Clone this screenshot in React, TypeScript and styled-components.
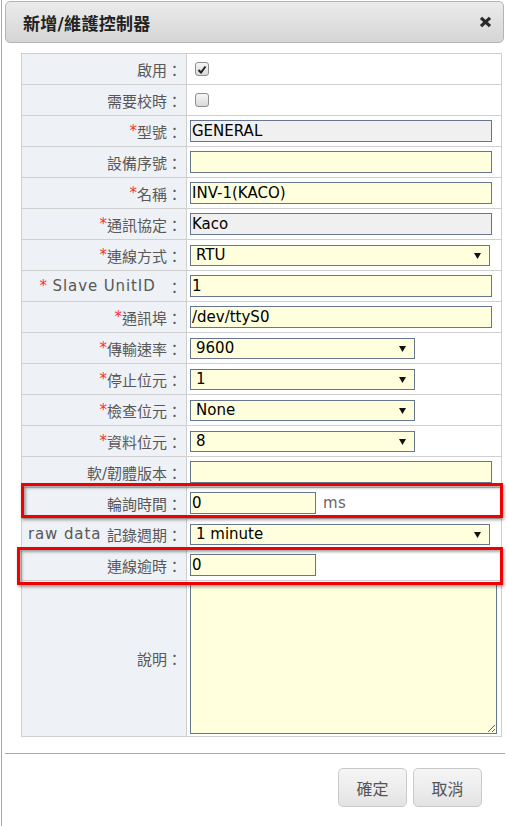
import React from "react";
import styled, { createGlobalStyle } from "styled-components";

const GlobalStyle = createGlobalStyle`
  html, body { margin: 0; padding: 0; background: #fff; }
  body { font-family: "DejaVu Sans", "Noto Sans CJK TC", sans-serif; }
  * { box-sizing: border-box; }
`;

const Dialog = styled.div`
  width: 507px;
  height: 826px;
  margin-left: 1px;
  border-left: 1px solid #a8a8a8;
  padding: 1px 0 0 3px;
  display: flex;
  flex-direction: column;
  overflow: hidden;
`;

const Header = styled.div`
  width: 499px;
  height: 42px;
  border: 1px solid #b4b4b4;
  border-radius: 5px;
  background: linear-gradient(#ebebeb, #d5d5d5);
  display: flex;
  align-items: center;
  justify-content: space-between;
  padding: 0 11px 0 17px;
`;

const Title = styled.span`
  font-size: 17px;
  font-weight: bold;
  color: #222;
  letter-spacing: 0.3px;
`;

const Close = styled.span`
  display: flex;
  width: 13px;
  height: 12px;
`;

const Body = styled.div`
  padding: 10px 0 16px 16px;
`;

const Form = styled.div`
  position: relative;
  width: 481px;
  display: grid;
  grid-template-columns: 165px 315px;
  border-top: 1px solid #cfcfcf;
  border-left: 1px solid #cfcfcf;
`;

const LabelCell = styled.div<{ $tall?: boolean }>`
  height: ${(p) => (p.$tall ? 156 : 31)}px;
  border-right: 1px solid #cfcfcf;
  border-bottom: 1px solid #cfcfcf;
  background: #eef1f5;
  display: flex;
  align-items: center;
  justify-content: flex-end;
  padding-right: 4px;
  font-size: 15px;
  color: #585858;
  white-space: pre;
`;

const Star = styled.span`
  color: #ff3030;
`;

const Latin = styled.span`
  letter-spacing: 0.9px;
`;

const ValueCell = styled.div<{ $tall?: boolean }>`
  height: ${(p) => (p.$tall ? 156 : 31)}px;
  border-right: 1px solid #cfcfcf;
  border-bottom: 1px solid #cfcfcf;
  display: flex;
  align-items: center;
  padding-left: 3px;
  gap: 7px;
`;

const TextField = styled.input<{ $w: number; $readonly?: boolean }>`
  width: ${(p) => p.$w}px;
  height: 22px;
  border: 1px solid #67768f;
  background: ${(p) => (p.$readonly ? "#f0f0f0" : "#ffffdd")};
  font-family: "DejaVu Sans", sans-serif;
  font-size: 15px;
  color: #000;
  padding: 0 1px;
  margin: 0;
  outline: none;
  border-radius: 0;
`;

const SelectWrap = styled.div<{ $w: number }>`
  position: relative;
  width: ${(p) => p.$w}px;
  height: 21px;
`;

const Select = styled.select`
  appearance: none;
  -webkit-appearance: none;
  width: 100%;
  height: 100%;
  border: 1px solid #67768f;
  border-radius: 0;
  background: #ffffdd;
  font-family: "DejaVu Sans", sans-serif;
  font-size: 15px;
  color: #000;
  padding: 0 0 0 5px;
  margin: 0;
  outline: none;
`;

const Arrow = styled.svg`
  position: absolute;
  right: 9px;
  top: 8px;
  pointer-events: none;
`;

const Unit = styled.span`
  font-size: 15px;
  color: #666;
  letter-spacing: 0.5px;
`;

const Check = styled.span`
  width: 14px;
  height: 14px;
  margin-left: 5px;
  border: 1px solid #8e8e8e;
  border-radius: 3px;
  background: linear-gradient(#f6f6f6, #d9d9d9);
  display: flex;
  align-items: center;
  justify-content: center;
`;

const TextArea = styled.textarea`
  width: 307px;
  height: 150px;
  border: 1px solid #67768f;
  background: #ffffdd;
  margin: 0;
  outline: none;
  resize: both;
  font-family: "DejaVu Sans", sans-serif;
  font-size: 15px;
`;

const Mark = styled.div<{ $top: number; $left: number; $w: number; $h: number }>`
  position: absolute;
  top: ${(p) => p.$top}px;
  left: ${(p) => p.$left}px;
  width: ${(p) => p.$w}px;
  height: ${(p) => p.$h}px;
  border: 3px solid #f00000;
  box-shadow: 1px 2px 3px rgba(0, 0, 0, 0.35), inset 2px 2px 3px rgba(0, 0, 0, 0.35);
  pointer-events: none;
`;

const Footer = styled.div`
  width: 500px;
  border-top: 1px solid #a9a9a9;
  padding: 14px 23px 0 0;
  display: flex;
  justify-content: flex-end;
  gap: 6px;
`;

const Button = styled.button`
  width: 69px;
  height: 39px;
  border: 1px solid #c9c9c9;
  border-radius: 5px;
  background: linear-gradient(#f5f5f5 0%, #ededed 50%, #e3e3e3 100%);
  font-family: "Noto Sans CJK TC", sans-serif;
  font-size: 16px;
  color: #555;
  padding: 0;
`;

const ArrowIcon = () => (
  <Arrow width="7" height="6" viewBox="0 0 7 6">
    <path d="M0 0H7L3.5 6Z" fill="#111" />
  </Arrow>
);

const Dropdown = ({ w, value }: { w: number; value: string }) => (
  <SelectWrap $w={w}>
    <Select defaultValue={value}>
      <option>{value}</option>
    </Select>
    <ArrowIcon />
  </SelectWrap>
);

const Label = ({ text, req }: { text: React.ReactNode; req?: boolean }) => (
  <LabelCell>
    {req && <Star>*</Star>}
    {text}
  </LabelCell>
);

export default function App() {
  return (
    <>
      <GlobalStyle />
      <Dialog>
        <Header>
          <Title>新增/維護控制器</Title>
          <Close>
            <svg width="13" height="12" viewBox="0 0 13 12">
              <path d="M2 1.8L11 10.2M11 1.8L2 10.2" stroke="#2a2a2a" strokeWidth="3.2" />
            </svg>
          </Close>
        </Header>
        <Body>
          <Form>
            <Label text="啟用：" />
            <ValueCell>
              <Check>
                <svg width="10" height="9" viewBox="0 0 10 9">
                  <path d="M1.5 5L4 7.5L8.5 1.5" stroke="#222" strokeWidth="2" fill="none" />
                </svg>
              </Check>
            </ValueCell>

            <Label text="需要校時：" />
            <ValueCell>
              <Check />
            </ValueCell>

            <Label text="型號：" req />
            <ValueCell>
              <TextField $w={302} $readonly defaultValue="GENERAL" readOnly />
            </ValueCell>

            <Label text="設備序號：" />
            <ValueCell>
              <TextField $w={302} defaultValue="" />
            </ValueCell>

            <Label text="名稱：" req />
            <ValueCell>
              <TextField $w={302} defaultValue="INV-1(KACO)" />
            </ValueCell>

            <Label text="通訊協定：" req />
            <ValueCell>
              <TextField $w={302} $readonly defaultValue="Kaco" readOnly />
            </ValueCell>

            <Label text="連線方式：" req />
            <ValueCell>
              <Dropdown w={300} value="RTU" />
            </ValueCell>

            <Label
              text={
                <>
                  <Latin>{" Slave UnitID  "}</Latin>：
                </>
              }
              req
            />
            <ValueCell>
              <TextField $w={302} defaultValue="1" />
            </ValueCell>

            <Label text="通訊埠：" req />
            <ValueCell>
              <TextField $w={302} defaultValue="/dev/ttyS0" />
            </ValueCell>

            <Label text="傳輸速率：" req />
            <ValueCell>
              <Dropdown w={225} value="9600" />
            </ValueCell>

            <Label text="停止位元：" req />
            <ValueCell>
              <Dropdown w={225} value="1" />
            </ValueCell>

            <Label text="檢查位元：" req />
            <ValueCell>
              <Dropdown w={225} value="None" />
            </ValueCell>

            <Label text="資料位元：" req />
            <ValueCell>
              <Dropdown w={225} value="8" />
            </ValueCell>

            <Label text="軟/韌體版本：" />
            <ValueCell>
              <TextField $w={302} defaultValue="" />
            </ValueCell>

            <Label text="輪詢時間：" />
            <ValueCell>
              <TextField $w={126} defaultValue="0" />
              <Unit>ms</Unit>
            </ValueCell>

            <Label
              text={
                <>
                  <Latin>{"raw data "}</Latin>記錄週期：
                </>
              }
            />
            <ValueCell>
              <Dropdown w={300} value="1 minute" />
            </ValueCell>

            <Label text="連線逾時：" />
            <ValueCell>
              <TextField $w={126} defaultValue="0" />
            </ValueCell>

            <LabelCell $tall>說明：</LabelCell>
            <ValueCell $tall>
              <TextArea />
            </ValueCell>

            <Mark $top={429} $left={-1} $w={482} $h={35} />
            <Mark $top={493} $left={-5} $w={486} $h={38} />
          </Form>
        </Body>
        <Footer>
          <Button>確定</Button>
          <Button>取消</Button>
        </Footer>
      </Dialog>
    </>
  );
}
